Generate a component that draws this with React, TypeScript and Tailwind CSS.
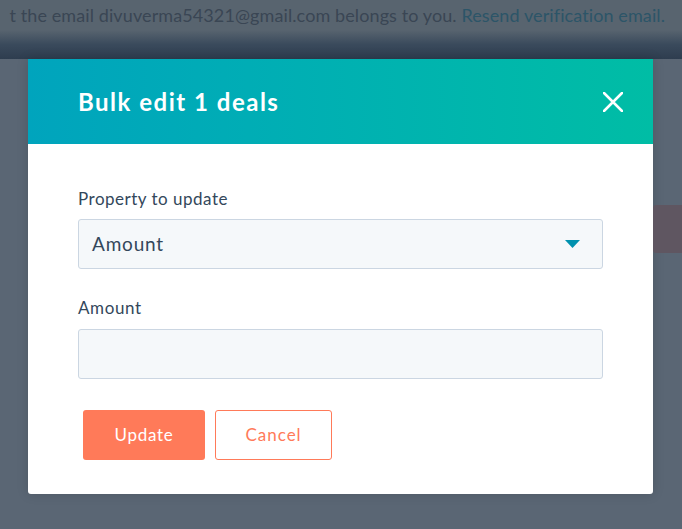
import { useState } from 'react'

const BulkEditModal = () => {
  const [amount, setAmount] = useState('')

  return (
    <div className="w-[625px] ml-[28px] bg-white rounded-b-[3px] overflow-hidden shadow-[0_0_12px_rgba(0,0,0,0.15)]">
      {/* Header */}
      <div className="h-[85px] flex items-center justify-between pl-[50px] pr-[30px] bg-gradient-to-r from-[#00a4bd] to-[#00bda5]">
        <h2 className="text-white text-[24px] font-bold tracking-[1.5px]">Bulk edit 1 deals</h2>
        <button className="w-[20px] h-[20px] flex items-center justify-center">
          <svg width="20" height="20" viewBox="0 0 20 20">
            <path d="M1 1 L19 19 M19 1 L1 19" stroke="white" strokeWidth="2.5" strokeLinecap="round" />
          </svg>
        </button>
      </div>

      {/* Body */}
      <div className="px-[50px] pt-[43px] pb-[34px]">
        <label className="block text-[17px] tracking-[0.5px] leading-[24px] text-[#33475b] mb-[8px]">Property to update</label>
        <div className="h-[50px] flex items-center justify-between pl-[13px] pr-[22px] bg-[#f5f8fa] border border-[#cbd6e2] rounded-[3px]">
          <span className="text-[19px] tracking-[0.8px] text-[#33475b]">Amount</span>
          <svg width="15" height="8" viewBox="0 0 15 8">
            <path d="M0 0 H15 L7.5 8 Z" fill="#0091ae" />
          </svg>
        </div>

        <label className="block text-[17px] tracking-[0.6px] leading-[24px] text-[#33475b] mt-[27px] mb-[9px]">Amount</label>
        <input
          value={amount}
          onChange={e => setAmount(e.target.value)}
          className="block w-full h-[50px] px-[13px] bg-[#f5f8fa] border border-[#cbd6e2] rounded-[3px] outline-none text-[18px] text-[#33475b]"
        />

        <div className="flex gap-[10px] mt-[31px] pl-[5px]">
          <button className="w-[122px] h-[50px] rounded-[3px] bg-[#ff7a59] text-white text-[17px] tracking-[0.7px]">Update</button>
          <button className="w-[117px] h-[50px] rounded-[3px] border border-[#ff7a59] bg-white text-[#ff7a59] text-[17px] tracking-[1px]">Cancel</button>
        </div>
      </div>
    </div>
  )
}

const App = () => {
  return (
    <div className="relative w-[682px] h-[529px] overflow-hidden bg-[#5a6674] font-['Lato','Liberation_Sans',sans-serif]">
      {/* Page behind the overlay */}
      <div className="h-[30px] flex items-center justify-end pr-[17px] whitespace-nowrap bg-[#58646f] text-[18px] tracking-[0.1px] text-[#3a4654]">
        <span>
          t the email divuverma54321@gmail.com belongs to you.{' '}
          <span className="text-[#2c5568]">Resend verification email.</span>
        </span>
      </div>
      <div className="h-[29px] bg-gradient-to-b from-[#58646f] via-[#3a4a5c] to-[#2e3d4f]" />

      {/* faint red button under the overlay */}
      <div className="absolute right-0 top-[205px] w-[29px] h-[48px] bg-[#5f5661] rounded-l-[3px]" />

      <BulkEditModal />
    </div>
  )
}

export default App
